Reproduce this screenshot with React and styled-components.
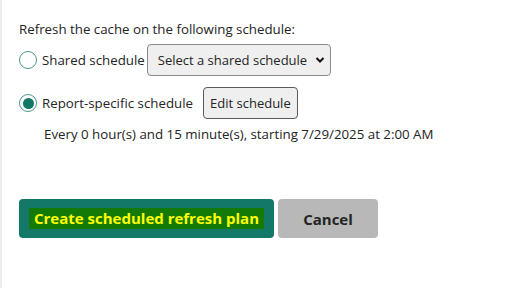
import React from "react";
import styled, { createGlobalStyle } from "styled-components";

const Global = createGlobalStyle`
  html, body { margin: 0; padding: 0; background: #fff; }
  body { font-family: "Open Sans", "Noto Sans", sans-serif; color: #242424; }
`;

const Page = styled.div`
  box-sizing: border-box;
  min-height: 288px;
  border-left: 2px solid #ececec;
  padding: 19px 0 0 17px;
  display: flex;
  flex-direction: column;
`;

const Intro = styled.div`
  font-size: 13.3px;
  line-height: 20px;
  margin-bottom: 5px;
`;

const Row = styled.label`
  display: flex;
  align-items: center;
  height: 32px;
  margin-bottom: ${(p) => p.$mb || 0}px;
  font-size: 13.3px;
`;

const Radio = styled.span`
  box-sizing: border-box;
  width: 18px;
  height: 18px;
  border-radius: 50%;
  border: 1.5px solid #4f978a;
  display: flex;
  align-items: center;
  justify-content: center;
  margin-right: 5px;
  flex: none;
  &::after {
    content: "";
    width: 11px;
    height: 11px;
    border-radius: 50%;
    background: ${(p) => (p.$checked ? "#117865" : "transparent")};
  }
`;

const SelectWrap = styled.span`
  position: relative;
  display: inline-flex;
  margin-left: 2px;
`;

const Select = styled.select`
  appearance: none;
  box-sizing: border-box;
  height: 32px;
  width: 184px;
  border: 1px solid #8a8a8a;
  border-radius: 4px;
  background: #efefef;
  font-family: inherit;
  font-size: 13px;
  color: #242424;
  padding: 0 0 0 10px;
`;

const Chevron = styled.svg`
  position: absolute;
  right: 6px;
  top: 12px;
  pointer-events: none;
`;

const Button = styled.button`
  box-sizing: border-box;
  height: 32px;
  margin-left: 10px;
  padding: 0 6px;
  border: 1px solid #5a5a5a;
  border-radius: 4px;
  background: #efefef;
  font-family: inherit;
  font-size: 13px;
  color: #242424;
`;

const Desc = styled.div`
  font-size: 13.3px;
  line-height: 20px;
  padding-left: 25px;
  margin-top: 5px;
`;

const Actions = styled.div`
  display: flex;
  gap: 4px;
  margin-top: 55px;
`;

const Action = styled.button`
  box-sizing: border-box;
  height: 39px;
  border: none;
  border-radius: 4px;
  font-family: inherit;
  font-weight: 700;
  font-size: 15px;
  padding: 0 ${(p) => p.$px}px;
  width: ${(p) => p.$w}px;
  background: ${(p) => (p.$primary ? "#137868" : "#b8b8b8")};
  color: ${(p) => (p.$primary ? "#ffff00" : "#242424")};
  display: flex;
  align-items: center;
  justify-content: center;
`;

const Highlight = styled.span`
  background: #137a07;
  color: #ffff00;
  padding: 1px 5px;
  line-height: 19px;
`;

export default function App() {
  return (
    <>
      <Global />
      <Page>
        <Intro>Refresh the cache on the following schedule:</Intro>
        <Row $mb={11}>
          <Radio />
          Shared schedule
          <SelectWrap>
            <Select defaultValue="">
              <option value="">Select a shared schedule</option>
            </Select>
            <Chevron width="10" height="8" viewBox="0 0 10 8">
              <path d="M1.5 2 L5 5.5 L8.5 2" fill="none" stroke="#111" strokeWidth="2" />
            </Chevron>
          </SelectWrap>
        </Row>
        <Row>
          <Radio $checked />
          Report-specific schedule
          <Button type="button">Edit schedule</Button>
        </Row>
        <Desc>Every 0 hour(s) and 15 minute(s), starting 7/29/2025 at 2:00 AM</Desc>
        <Actions>
          <Action $primary $w={255} $px={8} type="button">
            <Highlight>Create scheduled refresh plan</Highlight>
          </Action>
          <Action $w={100} $px={0} type="button">Cancel</Action>
        </Actions>
      </Page>
    </>
  );
}
